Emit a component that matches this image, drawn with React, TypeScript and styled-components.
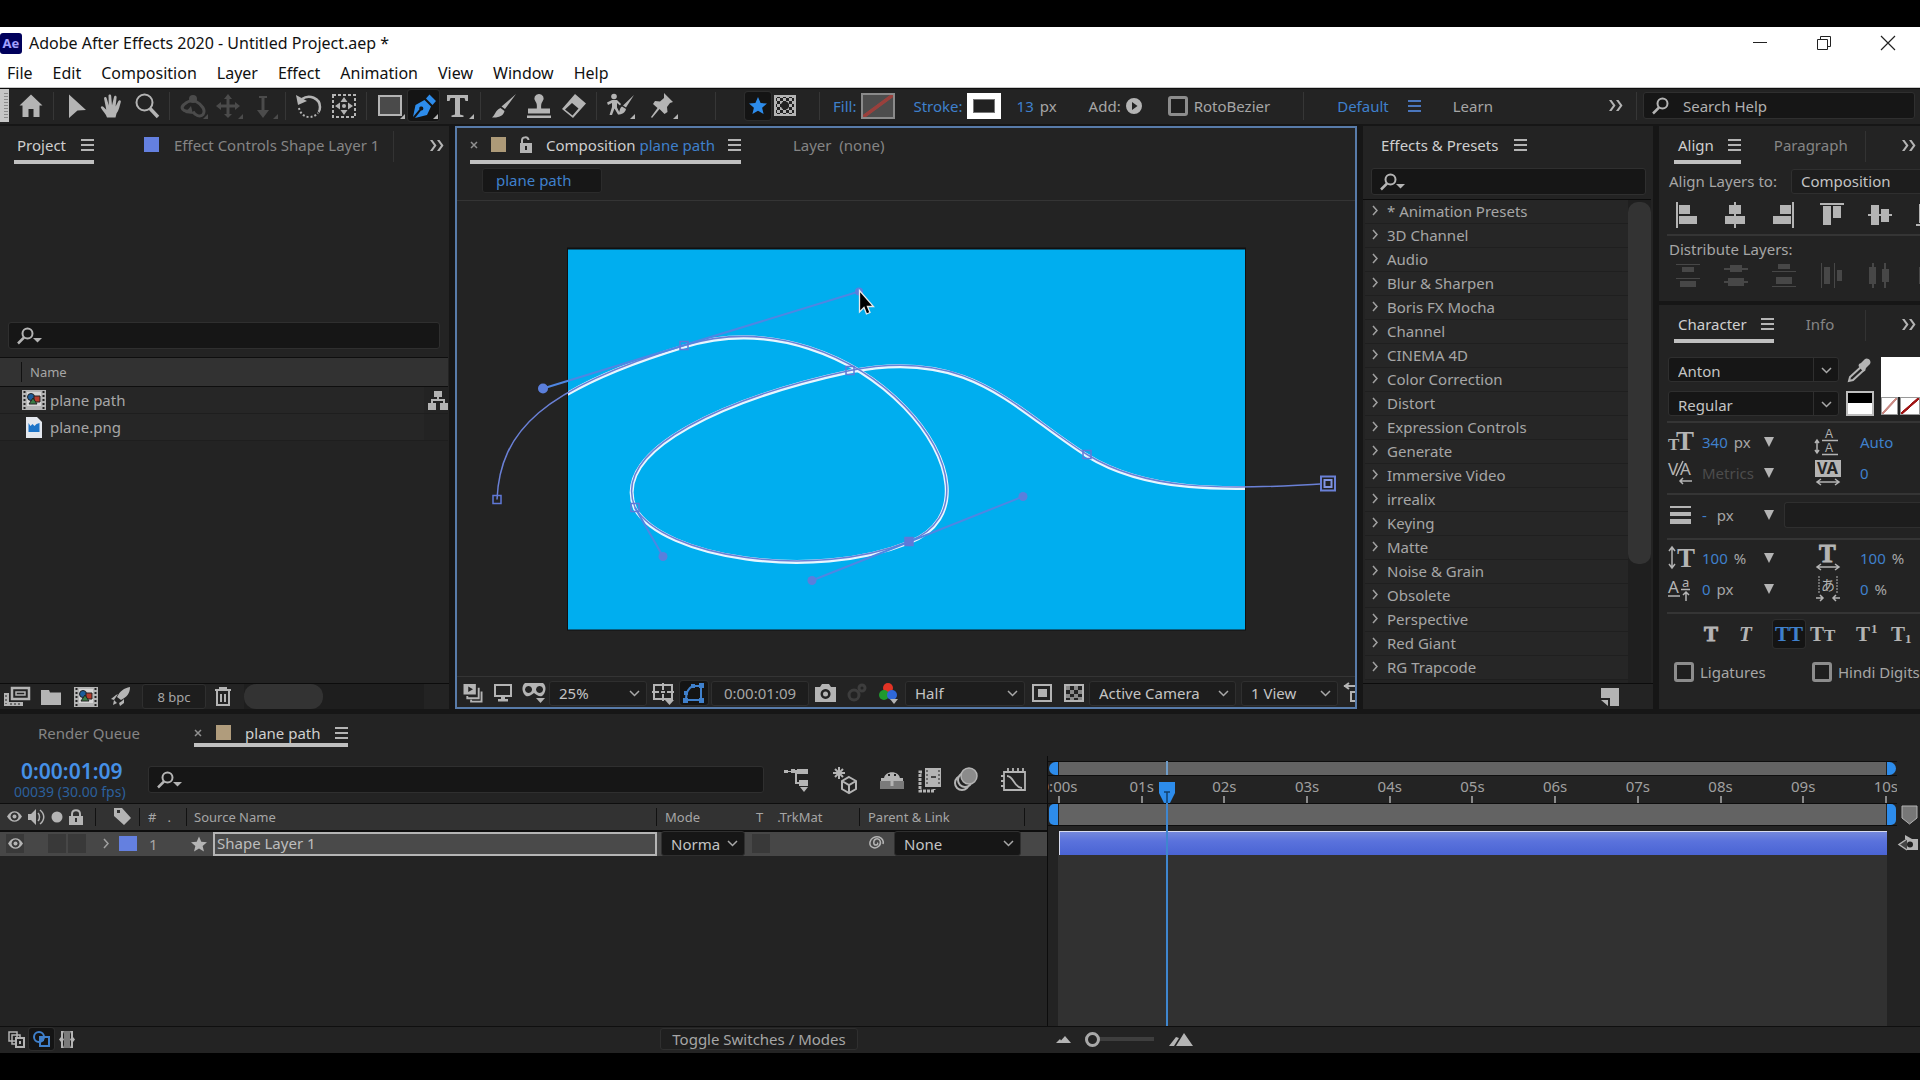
import React from "react";
import styled, { createGlobalStyle, css } from "styled-components";

const c = {
  panel: "#232323",
  gap: "#161616",
  field: "#161616",
  line: "#2f2f2f",
  text: "#a6a6a6",
  bright: "#cfcfcf",
  dim: "#858585",
  icon: "#b4b4b4",
  blue: "#3f80cc",
  hot: "#2d8ceb",
};

const Global = createGlobalStyle`
  *, *::before, *::after { box-sizing: border-box; }
  body { margin: 0; background: #000; }
  button, input, select { font: inherit; color: inherit; margin: 0; }
  body, #root { font-family: "Noto Sans", "Open Sans", sans-serif; font-size: 15px; line-height: 20px; color: ${c.text}; }
  h2 { font: inherit; margin: 0; }
`;

/* ---------- page frame ---------- */

const Page = styled.div`
  display: grid;
  grid-template-rows: 61px 36px minmax(0, 590fr) minmax(0, 339fr);
  height: 100vh;
  padding: 27px 0;
  background: #000;
  overflow: hidden;
`;

const TitleArea = styled.header`
  background: #fff;
  color: #111;
  font-size: 16px;
  border-bottom: 1px solid #c8c8c8;
`;

const TitleRow = styled.div`
  display: flex;
  align-items: center;
  height: 32px;
  gap: 7px;
`;

const AeBadge = styled.span`
  width: 22px;
  height: 21px;
  border-radius: 3px;
  background: #00005b;
  color: #a3a0ff;
  font-size: 13px;
  font-weight: 700;
  line-height: 20px;
  text-align: center;
`;

const WindowButtons = styled.div`
  display: flex;
  margin-left: auto;
  gap: 24px;
  padding-right: 12px;
`;

const WindowButton = styled.button`
  display: grid;
  place-items: center;
  width: 40px;
  height: 28px;
  padding: 0;
  border: 0;
  background: none;
`;

const MenuBar = styled.nav`
  display: flex;
  gap: 20px;
  padding: 3px 7px;
`;

const MenuItem = styled.button`
  padding: 0;
  border: 0;
  background: none;
  line-height: 22px;
`;

/* ---------- shared controls ---------- */

const Svg = styled.svg`
  display: block;
  flex: none;
  overflow: visible;
  fill: ${c.icon};
`;

const IconButton = styled.button<{ $w?: number; $h?: number; $on?: boolean; $margin?: number }>`
  display: grid;
  place-items: center;
  flex: none;
  width: ${(p) => p.$w ?? 30}px;
  height: ${(p) => p.$h ?? 24}px;
  margin: 0 ${(p) => p.$margin ?? 0}px;
  padding: 0;
  border: 0;
  border-radius: 3px;
  background: ${(p) => (p.$on ? "#141414" : "none")};
  box-shadow: ${(p) => (p.$on ? "0 0 0 1px #2d2d2d" : "none")};
`;

const TextButton = styled.button<{ $blue?: boolean }>`
  padding: 0;
  border: 0;
  background: none;
  white-space: nowrap;
  color: ${(p) => (p.$blue ? c.blue : "inherit")};
`;

const Spacer = styled.span`
  flex: 1;
`;

const SelectWrap = styled.span<{ $w?: number; $dark?: boolean }>`
  display: grid;
  grid-template-columns: minmax(0, 1fr) 24px;
  align-items: center;
  flex: ${(p) => (p.$w ? "none" : "1")};
  width: ${(p) => (p.$w ? `${p.$w}px` : "auto")};
  height: 25px;
  border: 1px solid ${c.line};
  border-radius: 3px;
  background: ${(p) => (p.$dark ? c.field : "#1d1d1d")};
  color: #c4c4c4;
  overflow: hidden;
  & > select {
    grid-area: 1 / 1 / 2 / 3;
    width: 100%;
    height: 23px;
    padding: 0 9px;
    border: 0;
    background: none;
    appearance: none;
    outline: none;
  }
  & > svg {
    grid-area: 1 / 2;
    pointer-events: none;
    justify-self: center;
  }
`;

const Chevron = () => (
  <Svg width="11" height="7" viewBox="0 0 11 7">
    <path d="M1 1l4.500 4.500L10 1" fill="none" stroke="#a8a8a8" strokeWidth="1.500" />
  </Svg>
);

function Select({ label, value, w, dark }: { label: string; value: string; w?: number; dark?: boolean }) {
  return (
    <SelectWrap $w={w} $dark={dark}>
      <select aria-label={label} defaultValue={value}>
        <option>{value}</option>
      </select>
      <Chevron />
    </SelectWrap>
  );
}

const SearchBox = styled.label`
  display: flex;
  align-items: center;
  gap: 12px;
  flex: 1;
  min-width: 0;
  height: 27px;
  padding-left: 8px;
  border: 1px solid ${c.line};
  border-radius: 3px;
  background: ${c.field};
  & > input {
    flex: 1;
    min-width: 0;
    padding: 0;
    border: 0;
    background: none;
    outline: none;
    color: #b0b0b0;
  }
  & > input::placeholder {
    color: #b0b0b0;
    opacity: 1;
  }
`;

const SearchGlyph = ({ menu = true }: { menu?: boolean }) => (
  <Svg width={menu ? 25 : 19} height="18" viewBox={menu ? "0 0 25 18" : "0 0 19 18"}>
    <circle cx="10.500" cy="6.500" r="5" fill="none" stroke={c.icon} strokeWidth="2" />
    <path d="M7 10.500L1 16.500" stroke={c.icon} strokeWidth="2.500" />
    {menu && <path d="M16 11h9l-4.500 4.500z" />}
  </Svg>
);

const Check = styled.label`
  display: flex;
  align-items: center;
  gap: 6px;
  white-space: nowrap;
  & > input {
    appearance: none;
    width: 20px;
    height: 20px;
    border: 3px solid #8c8c8c;
    border-radius: 3px;
    background: #1f1f1f;
  }
`;

/* ---------- tool bar ---------- */

const Toolbar = styled.div`
  display: flex;
  align-items: center;
  padding-bottom: 2px;
  background: ${c.panel};
  border-top: 1px solid #0d0d0d;
`;

const Grip = styled.span`
  align-self: stretch;
  width: 9px;
  margin-right: 4px;
  background: repeating-linear-gradient(#8a8a8a 0 1px, #c6c6c6 1px 3px) 4px 4px / 4px 26px no-repeat, #c6c6c6;
`;

const Sep = styled.span`
  flex: none;
  width: 1px;
  height: 28px;
  margin: 0 5px;
  background: #363636;
`;

const Group = styled.div<{ $before?: number; $after?: number; $gap?: number }>`
  display: flex;
  align-items: center;
  gap: ${(p) => p.$gap ?? 0}px;
  padding: 0 ${(p) => p.$after ?? 0}px 0 ${(p) => p.$before ?? 0}px;
`;

const Swatch = styled.button<{ $kind: "none" | "stroke" }>`
  display: grid;
  place-items: center;
  width: 34px;
  height: 26px;
  padding: 0;
  ${(p) =>
    p.$kind === "none"
      ? css`
          border: 2px solid #8a8a8a;
          background: linear-gradient(to bottom right, #4d4d4d 44%, #99403c 46% 54%, #4d4d4d 56%);
        `
      : css`
          border: 6px solid #fff;
          background: #222;
          box-shadow: inset 0 0 0 1px #777;
        `}
`;

const SearchHelp = styled.div`
  display: flex;
  flex: none;
  width: 272px;
  margin: 0 5px 0 1px;
`;

const MenuLines = ({ color = c.icon }: { color?: string }) => (
  <Svg width="13" height="12" viewBox="0 0 13 12">
    <path d="M0 1h13M0 6h13M0 11h13" stroke={color} strokeWidth="2" />
  </Svg>
);

const More = () => (
  <Svg width="15" height="13" viewBox="0 0 15 13">
    <path d="M1 1h2.500l4 5.500-4 5.500H1l4-5.500zM8 1h2.500l4 5.500-4 5.500H8l4-5.500z" />
  </Svg>
);

const Corner = ({ x = 24, y = 22 }: { x?: number; y?: number }) => <path d={`M${x + 5} ${y}v5h-5z`} />;

const T = ({ children, dim }: { children: React.ReactNode; dim?: boolean }) => (
  <Svg width="28" height="28" viewBox="0 0 28 28">
    <g fill={dim ? "#4b4b4b" : c.icon}>{children}</g>
  </Svg>
);

const tool: Record<string, React.ReactNode> = {
  home: <T><path d="M14 2.500L2.500 13.500h3V25h6v-8h5v8h6V13.500h3z" /></T>,
  select: <T><path d="M6 2.500l17 15.500-8.500.5L6 26z" /></T>,
  hand: (
    <T>
      <path d="M9 25.500c-1-3.500-4-6-6-9.500-.8-1.500 1.200-2.500 2.300-1.300l3 3-2.200-11c-.3-1.900 2.100-2.300 2.600-.5l2.100 7.300-.3-9.500c0-1.900 2.500-1.900 2.700 0l.8 9.200 2-8.200c.5-1.800 2.800-1.400 2.600.5l-1 9 2.800-5.500c.9-1.600 2.900-.8 2.400.9-1.300 4.400-1.800 8.200-4.300 11.600l-1 4z" />
    </T>
  ),
  zoom: (
    <T>
      <circle cx="11.500" cy="10.500" r="8" fill="none" stroke={c.icon} strokeWidth="2" />
      <path d="M17 16.500l8 8.500" stroke={c.icon} strokeWidth="3.500" />
    </T>
  ),
  orbit: (
    <T dim>
      <path d="M10 19c-6 1-9-3-5-6.500 3-3 8-5 12-3 6 3 10 9 7 13-3 3-8 1-10-3" fill="none" stroke="#4b4b4b" strokeWidth="3" />
      <path d="M12 14l2 8-8-1z" /><circle cx="14" cy="7" r="4" /><Corner />
    </T>
  ),
  pan: <T dim><path d="M14 2l4 5h-2.500v5.500H21V10l5 4-5 4v-2.500h-5.500V22H18l-4 4-4-4h2.500v-6.500H7V18l-5-4 5-4v2.500h5.500V7H10z" /><Corner /></T>,
  dolly: <T dim><path d="M10 4h8v2h-2.500v12h4.500l-6 8-6-8h4.500V6H10z" /><Corner /></T>,
  rotate: (
    <T>
      <path d="M7 7c7-5 18-1 18 8 0 2-.5 4-1.500 5" fill="none" stroke={c.icon} strokeWidth="2.500" />
      <path d="M1 3l2 10 9-4z" />
      <path d="M4 16c1 5 5 9 10 9s7-2 9-4" fill="none" stroke={c.icon} strokeWidth="2" strokeDasharray="2 2" />
    </T>
  ),
  anchor: (
    <T>
      <rect x="3" y="3" width="22" height="22" fill="none" stroke={c.icon} strokeWidth="2" strokeDasharray="3 2" />
      <path d="M14 5l3.500 5h-7zM14 23l3.500-5h-7zM5 14l5-3.500v7zM23 14l-5-3.500v7z" />
      <circle cx="14" cy="14" r="2" />
    </T>
  ),
  rect: <T><rect x="3" y="4" width="22" height="19" fill="#4a4a4a" stroke={c.icon} strokeWidth="2" /><Corner /></T>,
  pen: (
    <T>
      <path fill={c.hot} d="M3 25l2.500-12 9-5 6.500 6.500-4 8.500L5 26l6-7.500a2 2 0 1 0-1.500-1.200zM16 6.500l3.500-4L26 9l-3.500 4z" />
      <Corner x={23} />
    </T>
  ),
  type: <T><path d="M3 3h21v6h-2.500l-1-3h-4.500v16.500l3.500 1V25h-12v-1.500l3.500-1V6H6.500l-1 3H3z" /><Corner x={25} /></T>,
  brush: <T><path d="M26 2L15 17l-3.500-2.500zM10.500 16l4 3c-1 4.500-5 7-12.500 6.500 3-2 3-7 8.500-9.500z" /></T>,
  stamp: <T><path d="M14 2a4.500 4.500 0 0 1 3.500 7.500c-1.500 2-1.500 4-1.300 7H25v5H3v-5h8.800c.2-3 .2-5-1.300-7A4.500 4.500 0 0 1 14 2zM2 23.500h24V26H2z" /></T>,
  eraser: <T><path d="M15 2l11 9.500L13 26 2 17zm-3 9l-7 6.500 7.500 6 6-7z" fillRule="evenodd" /></T>,
  roto: (
    <T>
      <circle cx="8" cy="4.500" r="2.800" />
      <path d="M1 10.500l2-1 3-1.500h5l4 4-1 1.500-3-2.500v4.500l3 6-2 1-3.500-6L6 23H3.500L6 15v-4l-4 2z" />
      <path d="M28 3L20 15.500l-3-2zM16 14.500l4 2.500c-1 4-4 5.500-8 5.500 2-2 1-6 4-8z" /><Corner />
    </T>
  ),
  pin: <T><path d="M15 1l9 9-3 1-3 4 .5 5-3 2-5-5L3 26l-1-1 6.500-9-4.500-4 2-3 5 .5 4-3.500z" /><Corner /></T>,
};

const groups = [
  ["home"],
  ["select", "hand", "zoom"],
  ["orbit", "pan", "dolly"],
  ["rotate", "anchor"],
  ["rect", "pen", "type"],
  ["brush", "stamp", "eraser"],
];

function ToolsBar() {
  return (
    <Toolbar>
      <Grip />
      {groups.map((g) => (
        <React.Fragment key={g[0]}>
          {g.map((n) => (
            <IconButton key={n} $w={n === "pen" ? 31 : 35} $margin={n === "pen" ? 1 : 0} $h={31} $on={n === "pen"} aria-label={n}>
              {tool[n]}
            </IconButton>
          ))}
          <Sep />
        </React.Fragment>
      ))}
      <Group $gap={8} $after={30}>
        <IconButton $w={35} $h={31} aria-label="roto">{tool.roto}</IconButton>
        <IconButton $w={35} $h={31} aria-label="pin">{tool.pin}</IconButton>
      </Group>
      <Sep />
      <Group $before={24} $after={18} $gap={3}>
        <IconButton $w={26} $h={28} $on aria-label="create shape">
          <Svg width="18" height="18" viewBox="0 0 18 18"><path fill={c.hot} d="M9 0l2.600 6 6.400.6-4.900 4.200L14.600 17 9 13.700 3.400 17l1.500-6.200L0 6.600 6.400 6z" /></Svg>
        </IconButton>
        <IconButton $w={22} $h={24} aria-label="create mask">
          <Svg width="22" height="21" viewBox="0 0 22 21">
            <defs>
              <pattern id="chk" width="6" height="6" patternUnits="userSpaceOnUse"><path d="M0 0h3v3H0zM3 3h3v3H3z" /></pattern>
            </defs>
            <rect x="1" y="1" width="20" height="19" fill="#222" stroke={c.icon} strokeWidth="2" />
            <rect x="2" y="2" width="18" height="17" fill="url(#chk)" />
            <circle cx="11" cy="10.500" r="4" fill="#222" />
          </Svg>
        </IconButton>
      </Group>
      <Sep />
      <Group $before={8} $gap={5}>
        <TextButton $blue>Fill:</TextButton>
        <Swatch $kind="none" aria-label="Fill colour" />
      </Group>
      <Group $before={18} $gap={4}>
        <TextButton $blue>Stroke:</TextButton>
        <Swatch $kind="stroke" aria-label="Stroke colour" />
      </Group>
      <Group $before={16} $gap={6}>
        <TextButton $blue>13</TextButton>
        <span>px</span>
      </Group>
      <Group $before={32} $after={4} $gap={5}>
        <span>Add:</span>
        <IconButton $w={16} aria-label="Add">
          <Svg width="16" height="16" viewBox="0 0 16 16"><path fillRule="evenodd" d="M8 0a8 8 0 1 1 0 16A8 8 0 0 1 8 0zM6 4v8l5.500-4z" /></Svg>
        </IconButton>
      </Group>
      <Group $before={22} $after={28}>
        <Check><input type="checkbox" />RotoBezier</Check>
      </Group>
      <Sep />
      <Group $before={28} $gap={19}>
        <TextButton $blue>Default</TextButton>
        <MenuLines color="#4a76bd" />
      </Group>
      <Group $before={32}><TextButton>Learn</TextButton></Group>
      <Spacer />
      <More />
      <Group $before={8}><Sep /></Group>
      <SearchHelp>
        <SearchBox><SearchGlyph menu={false} /><input placeholder="Search Help" aria-label="Search Help" /></SearchBox>
      </SearchHelp>
    </Toolbar>
  );
}

/* ---------- panels ---------- */

const Workspace = styled.main`
  display: grid;
  grid-template-columns: minmax(0, 449fr) minmax(0, 902fr) minmax(0, 290fr) minmax(0, 261fr);
  grid-template-rows: minmax(0, 1fr);
  gap: 6px;
  padding: 2px 0 5px;
  background: ${c.gap};
`;

const Panel = styled.section<{ $active?: boolean }>`
  display: flex;
  flex-direction: column;
  min-width: 0;
  min-height: 0;
  overflow: hidden;
  background: ${c.panel};
  ${(p) => p.$active && "outline: 2px solid #587ba9; outline-offset: -2px;"}
`;

const Column = styled.div`
  display: grid;
  grid-template-rows: 175px minmax(0, 1fr);
  gap: 4px;
  min-width: 0;
`;

const TabBar = styled.div<{ $pad?: number }>`
  display: flex;
  align-items: stretch;
  flex: none;
  height: 38px;
  padding-left: ${(p) => p.$pad ?? 14}px;
`;

const Tab = styled.div<{ $on?: boolean; $gap?: number; $pad?: number; $plain?: boolean }>`
  display: flex;
  align-items: center;
  gap: ${(p) => p.$gap ?? 14}px;
  padding: 3px 0 0 ${(p) => p.$pad ?? 4}px;
  white-space: nowrap;
  color: ${(p) => (p.$on ? c.bright : c.dim)};
  border-bottom: 4px solid ${(p) => (p.$on && !p.$plain ? "#c0c0c0" : "transparent")};
`;

const TabRule = styled.span`
  width: 1px;
  margin: 5px 0 2px;
  background: #333;
`;

const TabMore = styled.button`
  display: grid;
  place-items: center;
  padding: 0;
  border: 0;
  background: none;
`;

const ColorChip = styled.i<{ $c: string; $w?: number }>`
  display: block;
  width: ${(p) => p.$w ?? 15}px;
  height: 15px;
  background: ${(p) => p.$c};
`;

const CloseMark = () => (
  <Svg width="8" height="8" viewBox="0 0 8 8"><path d="M1 1l6 6M7 1L1 7" stroke="#909090" strokeWidth="1.500" /></Svg>
);

const Footer = styled.div<{ $pad?: number }>`
  display: flex;
  align-items: center;
  flex: none;
  height: 26px;
  padding: 0 ${(p) => p.$pad ?? 0}px;
  border-top: 1px solid #0c0c0c;
`;

/* ---------- project ---------- */

const ProjectSearch = styled.div`
  display: flex;
  flex: none;
  padding: 158px 9px 8px 8px;
`;

const ProjectTable = styled.table`
  width: calc(100% - 1px);
  border-collapse: collapse;
  table-layout: fixed;
  th {
    height: 29px;
    padding: 0;
    background: #323232;
    border: solid #0e0e0e;
    border-width: 1px 0;
    font-weight: 400;
    font-size: 13px;
    text-align: left;
  }
  td {
    height: 27px;
    padding: 0;
    border-bottom: 1px solid #1e1e1e;
  }
  td:first-child {
    background: #262626;
  }
`;

const HeadLabel = styled.span`
  display: block;
  margin-left: 21px;
  padding-left: 8px;
  border-left: 1px solid #111;
`;

const ItemCell = styled.span`
  display: grid;
  grid-template-columns: 24px 1fr;
  align-items: center;
  gap: 4px;
  padding-left: 22px;
  & > svg { justify-self: center; }
`;

const UseCell = styled.span`
  display: flex;
  justify-content: flex-end;
`;

const DepthButton = styled.button`
  width: 64px;
  height: 25px;
  margin: 0 8px 0 4px;
  padding: 0;
  border: 1px solid ${c.line};
  border-radius: 3px;
  background: #1d1d1d;
  font-size: 13px;
`;

const HScroll = styled.div`
  flex: none;
  width: 180px;
  margin-left: 12px;
  background: #1e1e1e;
  &::before {
    content: "";
    display: block;
    width: 79px;
    height: 25px;
    border-radius: 12px;
    background: #333;
  }
`;

const CompGlyph = () => (
  <Svg width="24" height="20" viewBox="0 0 24 20">
    <path d="M0 0h24v20H0z" />
    <path d="M2.500 1v18M21.500 1v18" stroke="#222" strokeWidth="2" strokeDasharray="2 2" />
    <path d="M5 2h14v14H5z" fill="#d5d5d5" />
    <circle cx="9" cy="7" r="3.500" fill="#1c5d9b" stroke="#222" />
    <path d="M12 6h6v6h-6z" fill="#b63b2c" stroke="#222" />
    <path d="M11 8l4 6H7z" fill="#3a7d44" stroke="#222" />
  </Svg>
);

const FileGlyph = () => (
  <Svg width="16" height="21" viewBox="0 0 16 21">
    <path d="M0 0h11l5 5v16H0z" fill="#e4e8ee" />
    <path d="M2.500 6l2 3 2-2 2 2 2-2 3-1v9h-11z" fill="#1c74c8" />
  </Svg>
);

function ProjectPanel() {
  return (
    <Panel>
      <TabBar>
        <Tab $on $pad={3} $gap={15}><h2>Project</h2><MenuLines /></Tab>
        <Tab $pad={50} $gap={15}><ColorChip $c="#6480e0" /><span>Effect Controls Shape Layer 1</span></Tab>
        <Spacer />
        <TabRule />
        <Group $before={35} $after={5}><TabMore aria-label="More"><More /></TabMore></Group>
      </TabBar>
      <ProjectSearch><SearchBox><SearchGlyph /><input aria-label="Search project" /></SearchBox></ProjectSearch>
      <ProjectTable>
        <colgroup><col /><col width="24" /></colgroup>
        <thead><tr><th colSpan={2}><HeadLabel>Name</HeadLabel></th></tr></thead>
        <tbody>
          <tr>
            <td><ItemCell><CompGlyph />plane path</ItemCell></td>
            <td>
              <UseCell>
                <Svg width="20" height="19" viewBox="0 0 20 19">
                  <path d="M6 0h8v6H6zM0 12h8v7H0zM12 12h8v7h-8z" />
                  <path d="M10 5v4M4 13V9h12v4" fill="none" stroke={c.icon} strokeWidth="2" />
                </Svg>
              </UseCell>
            </td>
          </tr>
          <tr><td><ItemCell><FileGlyph />plane.png</ItemCell></td><td /></tr>
        </tbody>
      </ProjectTable>
      <Spacer />
      <Footer>
        <IconButton $w={33} aria-label="Interpret footage">
          <Svg width="26" height="19" viewBox="0 0 26 19">
            <path d="M8 1h17v11H8z" fill="none" stroke={c.icon} strokeWidth="2.500" /><path d="M12 5h9v3h-9z" fill="none" stroke={c.icon} strokeWidth="1.500" />
            <path d="M0 6h5v9h14v4H0z" /><path d="M2 8v9M6 17h11" stroke="#222" strokeDasharray="2 2" />
          </Svg>
        </IconButton>
        <IconButton $w={35} aria-label="New folder"><Svg width="20" height="16" viewBox="0 0 20 16"><path d="M0 1h8l1 2.500h11V16H0z" /></Svg></IconButton>
        <IconButton $w={35} aria-label="New composition"><CompGlyph /></IconButton>
        <IconButton $w={35} aria-label="Project settings">
          <Svg width="20" height="19" viewBox="0 0 20 19"><path d="M19 0c0 6-3 10-9 13l-4-3c3-6 7-9 13-10zM5 8l2-1-4 6-3-1zM11 14l2-2v4l-4 3-1-3zM3 13l3 3-4 2z" /></Svg>
        </IconButton>
        <DepthButton>8 bpc</DepthButton>
        <IconButton $w={18} aria-label="Delete">
          <Svg width="16" height="19" viewBox="0 0 16 19"><path d="M0 3h16M5 3V1h6v2M2 4v14h12V4M6 7v8M10 7v8" fill="none" stroke={c.icon} strokeWidth="2" /></Svg>
        </IconButton>
        <HScroll />
      </Footer>
    </Panel>
  );
}

/* ---------- composition viewer ---------- */

const Crumbs = styled.div`
  display: flex;
  flex: none;
  height: 36px;
  padding: 4px 27px 0;
`;

const Crumb = styled.button`
  width: 120px;
  height: 25px;
  padding: 0 13px 2px;
  border: 1px solid #2b2b2b;
  border-radius: 3px;
  background: #171717;
  color: ${c.blue};
  text-align: left;
`;

const Viewer = styled.div`
  flex: 1;
  min-height: 0;
  margin: 0 2px;
  border: solid #343434;
  border-width: 1px 0;
  & > svg { display: block; width: 100%; height: 100%; }
`;

const ViewerBar = styled.div`
  display: flex;
  align-items: center;
  flex: none;
  height: 32px;
  padding: 0 2px 0 3px;
  overflow: hidden;
`;

const TimeField = styled.input`
  flex: none;
  width: 98px;
  height: 25px;
  margin-left: 3px;
  padding: 0;
  border: 1px solid ${c.line};
  border-radius: 3px;
  background: #1d1d1d;
  text-align: center;
`;

const spline =
  "M497 499C500 430 543 388 684 345C859 291 1023 496 909 541C812 580 663 556 635 507C610 447 730 396 850 370C970 346 1013 407 1087 454C1145 490 1220 490 1328 483";

const Node = ({ x, y, on }: { x: number; y: number; on?: boolean }) => (
  <rect x={x - 4} y={y - 4} width="8" height="8" fill={on ? "#6079d8" : "none"} stroke="#6079d8" strokeWidth="1.500" />
);

function CompositionCanvas() {
  return (
    <svg viewBox="457 201 898 474" preserveAspectRatio="xMidYMid meet" role="img" aria-label="Composition preview">
      <clipPath id="frame"><rect x="568" y="249" width="677" height="380" /></clipPath>
      <rect x="567" y="247" width="679" height="383" fill="#101010" />
      <rect x="568" y="249" width="677" height="380" fill="#00aeef" />
      <path d={spline} transform="translate(0 1)" fill="none" stroke="#e8f6ff" strokeWidth="4" clipPath="url(#frame)" />
      <path d={spline} fill="none" stroke="#6a80d6" strokeWidth="1.500" />
      <g fill="none" stroke="#4f86e2" strokeWidth="2">
        <path d="M543 388L859 291M812 580L1023 496M635 507L663 556" />
      </g>
      <g fill="#5b7fdc">
        <circle cx="543" cy="388" r="5" /><circle cx="859" cy="291" r="4" />
        <circle cx="812" cy="580" r="4.500" /><circle cx="1023" cy="496" r="4.500" /><circle cx="663" cy="556" r="4.500" />
      </g>
      <Node x={497} y={499} /><Node x={684} y={345} /><Node x={850} y={370} /><Node x={1087} y={454} />
      <Node x={635} y={507} /><Node x={909} y={541} on />
      <rect x="1320" y="475" width="16" height="16" fill="#6a80d6" />
      <rect x="1322" y="477" width="12" height="12" fill="#222" />
      <rect x="1324.500" y="479.500" width="7" height="7" fill="#222" stroke="#8194e0" strokeWidth="2" />
      <path d="M859.500 290v21.500l4.500-4.500 2.500 6.500 3.500-1.500-2.500-6h6z" fill="#000" stroke="#e9e9e9" strokeWidth="1.300" />
    </svg>
  );
}

function CompositionPanel() {
  return (
    <Panel $active>
      <TabBar $pad={15}>
        <Tab $on $pad={0} $gap={13}>
          <CloseMark />
          <ColorChip $c="#ad9a78" />
          <Svg width="14" height="17" viewBox="0 0 14 17">
            <path d="M1 7h12v10H1z" /><path d="M3 8V4c0-3 6-4 6.500 0" fill="none" stroke={c.icon} strokeWidth="2" /><path d="M6 10h2v4H6z" fill="#222" />
          </Svg>
          <h2>Composition <TextButton $blue>plane path</TextButton></h2>
          <MenuLines />
        </Tab>
        <Tab $pad={52}>Layer&nbsp; (none)</Tab>
      </TabBar>
      <Crumbs><Crumb>plane path</Crumb></Crumbs>
      <Viewer><CompositionCanvas /></Viewer>
      <ViewerBar>
        <IconButton $w={30} aria-label="Always preview">
          <Svg width="20" height="19" viewBox="0 0 20 20">
            <path fillRule="evenodd" d="M0 0h13v11H0zM5 2.500v6l5-3z" /><path d="M4 12.500v2.500h12V4M8 16.500v2h11V8" fill="none" stroke={c.icon} strokeWidth="2" />
          </Svg>
        </IconButton>
        <IconButton $w={30} aria-label="Main viewer">
          <Svg width="18" height="18" viewBox="0 0 18 18"><path d="M1 1h16v11H1z" fill="none" stroke={c.icon} strokeWidth="2" /><path d="M7 12h4v3h3v2.500H4V15h3z" /></Svg>
        </IconButton>
        <IconButton $w={31} aria-label="View options">
          <Svg width="24" height="22" viewBox="0 0 24 22">
            <path fillRule="evenodd" d="M3 1h18c4 3 3 10-1 13-3 1-5-1-8-3-3 2-5 4-8 3C0 11-1 4 3 1zm3.500 3a3.500 3.500 0 1 0 .1 0zm11 0a3.500 3.500 0 1 0 .1 0z" /><path d="M14 16h9l-4.500 5z" />
          </Svg>
        </IconButton>
        <Select label="Magnification" value="25%" w={98} />
        <IconButton $w={32} aria-label="Grid and guides">
          <Svg width="22" height="21" viewBox="0 0 22 21"><path d="M2 2h18v14H2zM11 0v7M11 11v7M0 9h7M15 9h7M9 9h4" fill="none" stroke={c.icon} strokeWidth="2" /><path d="M13 17h9l-4.500 5z" /></Svg>
        </IconButton>
        <Group $before={1}>
          <IconButton $w={28} $on aria-label="Mask visibility">
            <Svg width="22" height="20" viewBox="0 0 22 20"><path d="M3 17c0-7 2-12 7-14h8v14z" fill="none" stroke={c.blue} strokeWidth="2" /><path fill={c.blue} d="M0 15h5v5H0zM16 15h5v5h-5zM16 0h5v5h-5zM8 1h4v4H8zM1 8h4v4H1z" /></Svg>
          </IconButton>
        </Group>
        <TimeField aria-label="Preview time" defaultValue="0:00:01:09" />
        <IconButton $w={32} aria-label="Snapshot">
          <Svg width="21" height="18" viewBox="0 0 21 18"><path fillRule="evenodd" d="M0 3h5l2-3h7l2 3h5v15H0zm10.500 2a5 5 0 1 0 .1 0z" /><circle cx="10.500" cy="10" r="2.500" /></Svg>
        </IconButton>
        <IconButton $w={32} aria-label="Show snapshot">
          <Svg width="20" height="18" viewBox="0 0 20 18"><g fill="none" stroke="#3d3d3d" strokeWidth="3"><circle cx="7" cy="11" r="5" /><circle cx="15" cy="4" r="3" /></g></Svg>
        </IconButton>
        <IconButton $w={32} aria-label="Channels">
          <Svg width="20" height="21" viewBox="0 0 20 21"><circle cx="9" cy="5" r="5" fill="#e23325" /><circle cx="5" cy="12" r="5" fill="#1f9a2f" /><circle cx="13" cy="12" r="5" fill="#2f68d8" /><path d="M11 16h8l-4 5z" /></Svg>
        </IconButton>
        <Select label="Resolution" value="Half" w={120} />
        <IconButton $w={34} aria-label="Region of interest">
          <Svg width="20" height="18" viewBox="0 0 20 18"><path d="M1 1h18v16H1z" fill="none" stroke={c.icon} strokeWidth="2" /><path d="M6 5h9v8H6z" /></Svg>
        </IconButton>
        <IconButton $w={30} aria-label="Transparency grid">
          <Svg width="20" height="18" viewBox="0 0 20 18"><path d="M1 1h18v16H1z" fill="none" stroke={c.icon} strokeWidth="2" /><path d="M2 2h4v4H2zM10 2h4v4h-4zM6 6h4v4H6zM14 6h4v4h-4zM2 10h4v4H2zM10 10h4v4h-4zM6 13h4v3H6zM14 13h4v3h-4z" opacity=".7" /></Svg>
        </IconButton>
        <Select label="3D view" value="Active Camera" w={147} />
        <Group $before={5}><Select label="View layout" value="1 View" w={97} /></Group>
        <Group $before={6}>
          <Svg width="22" height="20" viewBox="0 0 22 20"><path d="M0 3h16M5 0L1 3l4 3M22 9H7v9h15" fill="none" stroke={c.icon} strokeWidth="2" /></Svg>
        </Group>
      </ViewerBar>
    </Panel>
  );
}

/* ---------- effects & presets ---------- */

const effects = [
  "* Animation Presets", "3D Channel", "Audio", "Blur & Sharpen", "Boris FX Mocha", "Channel", "CINEMA 4D",
  "Color Correction", "Distort", "Expression Controls", "Generate", "Immersive Video", "irrealix", "Keying",
  "Matte", "Noise & Grain", "Obsolete", "Perspective", "Red Giant", "RG Trapcode",
];

const EffectSearch = styled.div`
  display: flex;
  flex: none;
  padding: 4px 7px 4px 8px;
`;

const EffectScroll = styled.div`
  display: grid;
  grid-template-columns: minmax(0, 1fr) 23px;
  flex: 1;
  min-height: 0;
  margin-right: 2px;
  border-top: 1px solid #0c0c0c;
  overflow: hidden;
`;

const EffectList = styled.ul`
  margin: 0;
  padding: 0 0 0 2px;
  list-style: none;
`;

const EffectItem = styled.button`
  display: flex;
  align-items: center;
  gap: 8px;
  width: 100%;
  height: 24px;
  padding: 0 0 2px 7px;
  border: 0;
  border-bottom: 1px solid #1f1f1f;
  background: #262626;
  text-align: left;
`;

const ScrollTrack = styled.div`
  background: #1f1f1f;
  &::before {
    content: "";
    display: block;
    height: 75%;
    margin-top: 2px;
    border-radius: 10px;
    background: #333;
  }
`;

const Twirl = () => (
  <Svg width="7" height="11" viewBox="0 0 7 11"><path d="M1 1l4 4.500L1 10" fill="none" stroke="#a0a0a0" strokeWidth="1.500" /></Svg>
);

function EffectsPanel() {
  return (
    <Panel>
      <TabBar>
        <Tab $on $plain $gap={16}><h2>Effects &amp; Presets</h2><MenuLines /></Tab>
      </TabBar>
      <EffectSearch><SearchBox><SearchGlyph /><input aria-label="Search effects" /></SearchBox></EffectSearch>
      <EffectScroll>
        <EffectList>
          {effects.map((e) => (
            <li key={e}><EffectItem><Twirl />{e}</EffectItem></li>
          ))}
        </EffectList>
        <ScrollTrack />
      </EffectScroll>
      <Footer $pad={33}>
        <Spacer />
        <IconButton $w={20} aria-label="New preset">
          <Svg width="18" height="18" viewBox="0 0 18 18"><path d="M0 0h18v18H9V10H0zM0 12h7v6z" /></Svg>
        </IconButton>
      </Footer>
    </Panel>
  );
}

/* ---------- align ---------- */

const AlignHead = styled.div`
  display: flex;
  align-items: center;
  gap: 14px;
  height: 30px;
  padding-left: 10px;
  margin: 2px -30px 0 0;
  white-space: nowrap;
`;

const AlignRow = styled.div<{ $h: number }>`
  display: flex;
  flex: none;
  gap: 13px;
  align-items: center;
  height: ${(p) => p.$h}px;
  padding-left: 11px;
`;

const Rule = styled.hr`
  flex: none;
  height: 2px;
  margin: 0 0 0 8px;
  border: 0;
  background: #353535;
`;

const Caption = styled.div`
  padding: 3px 0 0 10px;
`;

const alignIcons = [
  "M0 0h2v26H0zM3 3h11v9H3zM3 14h18v8H3z",
  "M10 0h2v26h-2zM5 3h12v9H5zM1 14h20v8H1z",
  "M20 0h2v26h-2zM8 3h11v9H8zM1 14h18v8H1z",
  "M0 1h24v2H0zM3 4h8v19H3zM13 4h8v12h-8z",
  "M0 12h24v2H0zM3 3h8v20H3zM13 7h8v13h-8z",
  "M0 22h24v2H0zM3 2h8v19H3zM13 9h8v12h-8z",
];

const distributeIcons = [
  "M0 1h24v1H0zM6 4h12v5H6zM0 15h24v1H0zM4 18h16v6H4z",
  "M0 5h24v2H0zM6 2h12v7H6zM0 18h24v2H0zM4 15h16v8H4z",
  "M6 1h12v5H6zM0 8h24v1H0zM4 14h16v7H4zM0 23h24v1H0z",
  "M1 0h1v25H1zM4 4h6v17H4zM14 0h1v25h-1zM17 7h5v11h-5z",
  "M4 0h2v25H4zM1 4h7v17H1zM16 0h2v25h-2zM14 6h7v13h-7z",
  "M3 4h7v17H3zM12 0h1v25h-1zM16 7h5v11h-5zM22 0h1v25h-1z",
];

const AlignIcon = ({ d, dim }: { d: string; dim?: boolean }) => (
  <IconButton $w={35} $h={28} aria-label="Align">
    <Svg width="24" height="26" viewBox="0 0 24 26"><path d={d} fill={dim ? "#474747" : c.icon} /></Svg>
  </IconButton>
);

function AlignPanel() {
  return (
    <Panel>
      <TabBar $pad={15}>
        <Tab $on><h2>Align</h2><MenuLines /></Tab>
        <Tab $pad={33}>Paragraph</Tab>
        <Spacer />
        <TabRule />
        <Group $before={35} $after={4}><TabMore aria-label="More"><More /></TabMore></Group>
      </TabBar>
      <AlignHead>Align Layers to:<Select label="Align layers to" value="Composition" /></AlignHead>
      <AlignRow $h={38}>{alignIcons.map((d) => <AlignIcon key={d} d={d} />)}</AlignRow>
      <Rule />
      <Caption>Distribute Layers:</Caption>
      <AlignRow $h={33}>{distributeIcons.map((d) => <AlignIcon key={d} d={d} dim />)}</AlignRow>
    </Panel>
  );
}

/* ---------- character ---------- */

const FontGrid = styled.div`
  display: grid;
  grid-template-columns: 171px 28px 1fr;
  gap: 9px 7px;
  flex: none;
  height: 78px;
  padding: 14px 0 5px 9px;
  align-items: center;
`;

const FontPicker = styled.div`
  display: flex;
  & svg { box-sizing: content-box; padding: 9px 7px; border-left: 1px solid ${c.line}; }
`;

const FillWell = styled.div`
  grid-area: 1 / 3 / 3 / 4;
  display: grid;
  grid-template: 40px 18px / 17px 1fr;
  gap: 0 2px;
  align-self: stretch;
`;

const BigWell = styled.button`
  grid-column: 1 / 3;
  border: 0;
  background: #fff;
`;

const MiniWell = styled.button<{ $red: string }>`
  padding: 0;
  border: 1px solid #999;
  background: linear-gradient(to bottom right, #fff 44%, ${(p) => p.$red} 46% 54%, #fff 56%);
`;

const DefaultWell = styled.button`
  height: 25px;
  padding: 0;
  border: 2px solid #bdbdbd;
  background: linear-gradient(#000 50%, #fff 50%);
`;

const Block = styled.div<{ $top: number; $bottom: number }>`
  display: grid;
  flex: none;
  grid-template-columns: 34px 62px 18px 32px 46px 1fr;
  grid-auto-rows: 29px;
  row-gap: 2px;
  align-items: center;
  padding: ${(p) => `${p.$top}px 0 ${p.$bottom}px 9px`};
`;

const Val = styled.span<{ $off?: boolean }>`
  display: flex;
  gap: 6px;
  white-space: nowrap;
  color: ${(p) => (p.$off ? "#4c4c4c" : c.text)};
  & > b { font-weight: 400; color: ${c.blue}; }
`;

const StrokeStyle = styled.input`
  grid-column: 4 / 7;
  height: 26px;
  width: auto;
  margin-left: 2px;
  border: 1px solid ${c.line};
  border-right: 0;
  border-radius: 3px 0 0 3px;
  background: #1d1d1d;
`;

const StyleRow = styled.div`
  display: flex;
  gap: 11px;
  flex: none;
  padding: 6px 0 0 36px;
`;

const OptionRow = styled.div`
  display: grid;
  grid-template-columns: 138px 1fr;
  padding: 14px 0 0 15px;
`;

const Down = () => <Svg width="10" height="10" viewBox="0 0 10 10"><path d="M0 0h10L5 10z" /></Svg>;

const Glyph = ({ children }: { children: React.ReactNode }) => (
  <Svg width="28" height="26" viewBox="0 0 28 26" fontFamily="Liberation Serif, serif" fontWeight="700">{children}</Svg>
);

const HArrow = ({ y = 22, x1 = 3, x2 = 25 }: { y?: number; x1?: number; x2?: number }) => (
  <path d={`M${x1} ${y}h${x2 - x1}M${x1 + 4} ${y - 3}l-4 3 4 3M${x2 - 4} ${y - 3}l4 3-4 3`} fill="none" stroke={c.icon} strokeWidth="1.500" />
);

const styleGlyphs = [
  [<text x="7" y="20" fontSize="21" stroke={c.icon} strokeWidth="1">T</text>, <text x="7" y="20" fontSize="21" fontStyle="italic">T</text>],
  [
    <g fill={c.blue}><text x="0" y="20" fontSize="21">T</text><text x="14" y="20" fontSize="21">T</text></g>,
    <g><text x="0" y="20" fontSize="21">T</text><text x="14" y="20" fontSize="17">T</text></g>,
  ],
  [
    <g><text x="3" y="20" fontSize="21">T</text><text x="18" y="12" fontSize="13">1</text></g>,
    <g><text x="3" y="20" fontSize="21">T</text><text x="17" y="22" fontSize="13">1</text></g>,
  ],
];

function CharacterPanel() {
  return (
    <Panel>
      <TabBar $pad={15}>
        <Tab $on $gap={14}><h2>Character</h2><MenuLines /></Tab>
        <Tab $pad={32}>Info</Tab>
        <Spacer />
        <TabRule />
        <Group $before={35} $after={4}><TabMore aria-label="More"><More /></TabMore></Group>
      </TabBar>
      <FontGrid>
        <FontPicker><Select label="Font family" value="Anton" dark /></FontPicker>
        <IconButton $w={28} aria-label="Eyedropper">
          <Svg width="24" height="24" viewBox="0 0 24 24"><path d="M13 9l3 3L5 22l-4 1 1-4z" fill="none" stroke={c.icon} strokeWidth="2" /><path d="M11 6l2-1 4-4c3-2 7 2 5 5l-4 4-1 3-2 .5L10.500 8z" /></Svg>
        </IconButton>
        <FontPicker><Select label="Font style" value="Regular" dark /></FontPicker>
        <DefaultWell aria-label="Default colours" />
        <FillWell>
          <BigWell aria-label="Fill colour" />
          <MiniWell $red="#c98a84" aria-label="No fill" />
          <MiniWell $red="#a01515" aria-label="No stroke" />
        </FillWell>
      </FontGrid>
      <Rule />
      <Block $top={4} $bottom={6}>
        <Glyph><text x="0" y="21" fontSize="17">T</text><text x="8" y="21" fontSize="27">T</text></Glyph>
        <Val><b>340</b>px</Val><Down /><span />
        <Glyph>
          <g fontFamily="Liberation Sans, sans-serif" fontWeight="400"><text x="11" y="9" fontSize="12">A</text><text x="11" y="23" fontSize="12">A</text></g>
          <path d="M8 11.500h16M8 25.500h16M3 11v13M1 14l2-3 2 3M1 21l2 3 2-3" fill="none" stroke={c.icon} strokeWidth="1.500" />
        </Glyph>
        <Val><b>Auto</b></Val>
        <Glyph>
          <g fontFamily="Noto Sans, sans-serif" fontWeight="400"><text x="0" y="15" fontSize="17">V</text><text x="12" y="15" fontSize="17">A</text></g>
          <path d="M8 16L15 1M12 21h12M15 18l-3 3 3 3" fill="none" stroke={c.icon} strokeWidth="1.500" />
        </Glyph>
        <Val $off>Metrics</Val><Down /><span />
        <Glyph>
          <path d="M1 0h26v17H1z" /><text x="3" y="14" fontSize="16" fill="#222" fontFamily="Noto Sans, sans-serif">VA</text><HArrow />
        </Glyph>
        <Val><b>0</b></Val>
      </Block>
      <Rule />
      <Block $top={5} $bottom={9}>
        <Svg width="24" height="20" viewBox="0 0 24 20"><path d="M2 1h21v2H2zM2 7h21v4H2zM2 14h21v5H2z" /></Svg>
        <Val><b>-</b>&nbsp;px</Val><Down />
        <StrokeStyle aria-label="Stroke style" />
      </Block>
      <Rule />
      <Block $top={3} $bottom={9}>
        <Glyph><text x="9" y="22" fontSize="27">T</text><path d="M4 3v19M1 6l3-4 3 4M1 19l3 4 3-4" fill="none" stroke={c.icon} strokeWidth="1.500" /></Glyph>
        <Val><b>100</b>%</Val><Down /><span />
        <Glyph><text x="5" y="17" fontSize="25" stroke={c.icon} strokeWidth="1">T</text><HArrow /></Glyph>
        <Val><b>100</b>%</Val>
        <Glyph>
          <g fontFamily="Noto Sans, sans-serif" fontWeight="400"><text x="0" y="17" fontSize="17">A</text><text x="14" y="11" fontSize="13">a</text></g>
          <path d="M0 20h12M13 13.500h9M18 25v-9M15 19l3-3 3 3" fill="none" stroke={c.icon} strokeWidth="1.500" />
        </Glyph>
        <Val><b>0</b>px</Val><Down /><span />
        <Glyph>
          <text x="7" y="14" fontSize="14" fontWeight="400" fontFamily="Noto Sans CJK JP, sans-serif">あ</text>
          <path d="M5 0v17M23 0v17" fill="none" stroke={c.icon} strokeDasharray="2 1" /><path d="M2 22h7M6 19l3 3-3 3M26 22h-7M22 19l-3 3 3 3" fill="none" stroke={c.icon} strokeWidth="1.500" />
        </Glyph>
        <Val><b>0</b>%</Val>
      </Block>
      <Rule />
      <StyleRow>
        {styleGlyphs.map((pair, i) => (
          <Group key={i} $gap={3}>
            {pair.map((g, j) => (
              <IconButton key={j} $w={32} $h={28} $on={i === 1 && j === 0} aria-label="Type style"><Glyph>{g}</Glyph></IconButton>
            ))}
          </Group>
        ))}
      </StyleRow>
      <OptionRow>
        <Check><input type="checkbox" />Ligatures</Check>
        <Check><input type="checkbox" />Hindi Digits</Check>
      </OptionRow>
    </Panel>
  );
}

/* ---------- timeline ---------- */

const TimelinePanel = styled.section`
  display: grid;
  grid-template-rows: 42px minmax(0, 1fr) 26px;
  background: ${c.panel};
  overflow: hidden;
`;

const TimelineBody = styled.div`
  display: grid;
  grid-template-columns: minmax(0, 1048fr) minmax(0, 872fr);
  min-height: 0;
  border-bottom: 1px solid #0f0f0f;
`;

const LayerSide = styled.div`
  border-right: 1px solid #0c0c0c;
`;

const TimeBar = styled.div`
  display: flex;
  align-items: center;
  height: 47px;
`;

const TimeCode = styled.div`
  width: 148px;
  padding-left: 14px;
  white-space: nowrap;
`;

const TimeNow = styled.button`
  display: block;
  padding: 0 7px;
  border: 0;
  background: none;
  color: #4590e6;
  font-size: 21px;
  font-weight: 600;
  line-height: 24px;
`;

const Frames = styled.span`
  display: block;
  font-size: 14px;
  line-height: 18px;
  color: #2c609c;
`;

const LayerTable = styled.table`
  width: 100%;
  border-collapse: collapse;
  table-layout: fixed;
  th {
    height: 27px;
    padding: 0;
    border: solid #0e0e0e;
    border-width: 1px 0 2px;
    background: #323232;
    font-size: 13px;
    font-weight: 400;
    text-align: left;
    white-space: nowrap;
  }
  td {
    height: 24px;
    padding: 0;
    background: #474747;
  }
`;

const Cell = styled.span<{ $pad?: number; $gap?: number; $rule?: boolean }>`
  display: flex;
  align-items: center;
  height: 18px;
  gap: ${(p) => p.$gap ?? 0}px;
  padding-left: ${(p) => p.$pad ?? 8}px;
  border-right: 1px solid ${(p) => (p.$rule ? "#111" : "transparent")};
`;

const Toggle = styled.button`
  display: grid;
  place-items: center;
  width: 18px;
  height: 19px;
  padding: 0;
  border: 0;
  background: #393939;
`;

const NameInput = styled.input`
  flex: 1;
  min-width: 0;
  height: 24px;
  padding: 0 2px 2px;
  border: 2px solid #b5b5b5;
  background: #4a4a4a;
  color: #bdbdbd;
  outline: none;
`;

const RowCell = styled.span<{ $pad?: number; $gap?: number }>`
  display: flex;
  align-items: center;
  height: 24px;
  gap: ${(p) => p.$gap ?? 0}px;
  padding-left: ${(p) => p.$pad ?? 0}px;
`;

const Eye = () => (
  <Svg width="15" height="11" viewBox="0 0 15 11"><path fillRule="evenodd" d="M0 5.500C4-1.500 11-1.500 15 5.500 11 12.500 4 12.500 0 5.500zM7.500 1.500a4 4 0 1 0 .1 0z" /><circle cx="7.500" cy="5.500" r="2" /></Svg>
);

function LayerList() {
  return (
    <LayerTable>
      <colgroup>
        <col width="96" /><col width="44" /><col width="47" /><col /><col width="91" /><col width="112" /><col width="165" /><col width="22" />
      </colgroup>
      <thead>
        <tr>
          <th>
            <Cell $gap={6} $rule $pad={7}>
              <Eye />
              <Svg width="17" height="16" viewBox="0 0 17 16"><path d="M0 5h3l5-5v16l-5-5H0z" /><path d="M10 4c2 2 2 6 0 8M12 1c5 4 5 10 0 14" fill="none" stroke={c.icon} strokeWidth="1.500" /></Svg>
              <Svg width="12" height="12" viewBox="0 0 12 12"><circle cx="6" cy="6" r="5.500" /></Svg>
              <Svg width="14" height="16" viewBox="0 0 14 16"><path fillRule="evenodd" d="M0 7h14v9H0zM6 9v4h2V9z" /><path d="M3 8V5c0-5 8-5 8 0v3" fill="none" stroke={c.icon} strokeWidth="2" /></Svg>
            </Cell>
          </th>
          <th>
            <Cell $rule $pad={18}>
              <Svg width="17" height="17" viewBox="0 0 17 17"><path fillRule="evenodd" d="M0 0h8l9 10-7 7L0 8zM3 2v3h3V2z" /></Svg>
            </Cell>
          </th>
          <th><Cell $rule $gap={11}>#<span>.</span></Cell></th>
          <th><Cell $rule $pad={7}>Source Name</Cell></th>
          <th><Cell>Mode</Cell></th>
          <th><Cell $rule $gap={14}><span>T</span><span>.TrkMat</span></Cell></th>
          <th><Cell $rule>Parent &amp; Link</Cell></th>
          <th />
        </tr>
      </thead>
      <tbody>
        <tr>
          <td><RowCell $pad={6} $gap={2}><Toggle aria-label="Visible"><Eye /></Toggle><Group $before={22} $gap={2}><Toggle aria-label="Solo" /><Toggle aria-label="Lock" /></Group></RowCell></td>
          <td><RowCell $pad={7} $gap={9}><Twirl /><ColorChip $c="#6480e0" $w={18} /></RowCell></td>
          <td><RowCell $pad={9}>1</RowCell></td>
          <td>
            <RowCell $pad={4} $gap={6}>
              <Svg width="16" height="16" viewBox="0 0 18 17"><path d="M9 0l2.600 6 6.400.6-4.900 4.200L14.600 17 9 13.700 3.400 17l1.500-6.200L0 6.600 6.400 6z" /></Svg>
              <NameInput aria-label="Layer name" defaultValue="Shape Layer 1" />
            </RowCell>
          </td>
          <td><RowCell $pad={4}><Select label="Blend mode" value="Norma" w={84} dark /></RowCell></td>
          <td><RowCell $pad={4}><Toggle aria-label="Preserve transparency" /></RowCell></td>
          <td>
            <RowCell $pad={8} $gap={9}>
              <Svg width="17" height="17" viewBox="0 0 17 17"><path d="M9 8c1 0 1 2-1 2-3 0-3-5 0-6 4-1 6 4 3 7-4 4-10 1-9-4 1-4 5-6 9-5 3 1 5 4 4 7" fill="none" stroke={c.icon} strokeWidth="1.500" /></Svg>
              <Select label="Parent" value="None" w={127} dark />
            </RowCell>
          </td>
          <td />
        </tr>
      </tbody>
    </LayerTable>
  );
}

const TrackSide = styled.div`
  display: grid;
  grid-template-columns: minmax(0, 1fr) 23px;
  min-height: 0;
  padding-top: 5px;
`;

const Tracks = styled.div`
  position: relative;
  display: grid;
  grid-template-rows: 15px 27px 23px 5px 24px minmax(0, 1fr);
  overflow: hidden;
`;

const Range = styled.div<{ $cap: number }>`
  display: flex;
  padding-left: 1px;
  padding-right: 1px;
  border: solid #0e0e0e;
  border-width: 1px 0;
  & > i { width: 9px; background: ${c.hot}; border-radius: ${(p) => p.$cap}px 0 0 ${(p) => p.$cap}px; }
  & > i:last-child { border-radius: 0 ${(p) => p.$cap}px ${(p) => p.$cap}px 0; }
  & > span { flex: 1; margin: 0 1px; background: #636363; }
`;

const Ruler = styled.div`
  display: flex;
  justify-content: space-between;
  padding: 0 10px;
`;

const Tick = styled.span`
  display: flex;
  flex-direction: column;
  align-items: center;
  width: 2px;
  white-space: nowrap;
  color: #a0a0a0;
  &::after {
    content: "";
    flex: 1;
    width: 2px;
    background: #8a8a8a;
  }
`;

const TickLabel = styled.span`
  display: flex;
  justify-content: center;
  width: 0;
`;

const LayerTrack = styled.div`
  margin: 0 10px 0 11px;
  border: solid #d8dcf0;
  border-width: 1px 0 0 1px;
  background: linear-gradient(#7488dc, #5a72dc 40%, #4a64d4);
`;

const EmptyTracks = styled.div`
  margin: 0 10px;
  background: #313131;
`;

const PlayheadRail = styled.div`
  position: absolute;
  inset: 0 11px;
  pointer-events: none;
`;

const Playhead = styled.div`
  position: absolute;
  top: 0;
  bottom: 0;
  width: 2px;
  margin-left: -1px;
  background: linear-gradient(#6f9cc8 0 14px, transparent 14px 40px, #3f86cf 40px);
  & > svg { position: absolute; top: 21px; left: -8px; }
`;

const MarkerStrip = styled.div`
  display: flex;
  flex-direction: column;
  align-items: flex-end;
  gap: 10px;
  padding: 44px 2px 0 0;
`;

const timelineIcons: [string, number, React.ReactNode][] = [
  ["Flowchart", 46, <><path d="M0 3h4v1h3V2h4v4H7V5H4v1H0zM13 2h11v5H13zM15 13h9v6h-9zM16 20h8l-4 5z" /><path d="M7 4h8M12 5v11h5" fill="none" stroke={c.icon} strokeWidth="2" /></>],
  ["Draft 3D", 50, <><path d="M7 0v12M1 6h12M3 2l8 8M11 2l-8 8" stroke={c.icon} strokeWidth="2" /><path d="M17 10l7 4v8l-7 4-7-4v-8zM10 14l7 4 7-4M17 18v8" fill="none" stroke={c.icon} strokeWidth="2" /></>],
  ["Shy", 44, <><path d="M1 14h24v8H1z" opacity=".6" /><path d="M5 12c0-9 16-9 16 0zM2 11h22v3H2z" /><path d="M13 8v11" stroke={c.icon} strokeWidth="3" /><path d="M9 8h2M15 8h2" stroke="#222" strokeWidth="2" /></>],
  ["Frame blending", 32, <><path d="M8 1h16v19H8z" /><path d="M5 5H3v19h14v-2" fill="none" stroke={c.icon} strokeWidth="3" strokeDasharray="3 1" /><path d="M10 3v16M22 3v16" stroke="#222" strokeDasharray="2 2" /><path d="M14 10h5" stroke="#222" strokeWidth="1.500" /></>],
  ["Motion blur", 40, <><circle cx="9" cy="16" r="7" fill="#222" stroke={c.icon} strokeWidth="2" /><circle cx="12" cy="13" r="7" fill="#222" stroke={c.icon} strokeWidth="2" /><circle cx="16" cy="9" r="8" fill="#8b8b8b" stroke={c.icon} strokeWidth="1.500" /></>],
  ["Graph editor", 56, <><path d="M3 5h21v18H3zM6 9c7 0 7 12 15 12M7 1v4M12 1v4M17 1v4M22 1v4M0 9h3M0 14h3M0 19h3" fill="none" stroke={c.icon} strokeWidth="1.800" /></>],
];

const seconds = ["0:00s", "01s", "02s", "03s", "04s", "05s", "06s", "07s", "08s", "09s", "10s"];
const frame = 39;
const duration = 300;

const TimelineFooter = styled.div`
  display: grid;
  grid-template-columns: minmax(0, 1048fr) minmax(0, 872fr);
  align-items: center;
  padding-bottom: 2px;
`;

const FooterTools = styled.div`
  display: flex;
  align-items: center;
  padding: 0 190px 0 4px;
`;

const SwitchButton = styled.button`
  width: 198px;
  height: 22px;
  padding: 0;
  border: 1px solid ${c.line};
  border-radius: 3px;
  background: #1f1f1f;
`;

const ZoomSlider = styled.input`
  width: 69px;
  height: 16px;
  margin: 0 15px 0 14px;
  appearance: none;
  background: linear-gradient(#3e3e3e, #3e3e3e) 0 6px / 100% 4px no-repeat;
  &::-webkit-slider-thumb {
    appearance: none;
    width: 15px;
    height: 15px;
    border: 3px solid #a8a8a8;
    border-radius: 50%;
    background: #232323;
  }
`;

function Timeline() {
  return (
    <TimelinePanel>
      <TabBar $pad={34}>
        <Tab>Render Queue</Tab>
        <Group $before={54}>
          <Tab $on $pad={0} $gap={14}><CloseMark /><ColorChip $c="#b09c7c" /><h2>plane path</h2><MenuLines /></Tab>
        </Group>
      </TabBar>
      <TimelineBody>
        <LayerSide>
          <TimeBar>
            <TimeCode><TimeNow>0:00:01:09</TimeNow><Frames>00039 (30.00 fps)</Frames></TimeCode>
            <SearchBox><SearchGlyph /><input aria-label="Search layers" /></SearchBox>
            <Group $before={10} $after={5}>
              {timelineIcons.map(([label, w, art]) => (
                <IconButton key={label} $w={w} $h={30} aria-label={label}><Svg width="26" height="26" viewBox="0 0 26 26">{art}</Svg></IconButton>
              ))}
            </Group>
          </TimeBar>
          <LayerList />
        </LayerSide>
        <TrackSide>
          <Tracks>
            <Range $cap={8}><i /><span /><i /></Range>
            <Ruler>
              {seconds.map((s) => <Tick key={s}><TickLabel>{s}</TickLabel></Tick>)}
            </Ruler>
            <Range $cap={5}><i /><span /><i /></Range>
            <span />
            <LayerTrack />
            <EmptyTracks />
            <PlayheadRail>
              <Playhead style={{ left: `${(frame / duration) * 100}%` }}>
                <Svg width="18" height="21" viewBox="0 0 18 21"><path d="M1 0h16v11l-5 10H6L1 11z" fill={c.hot} /><path d="M9 10v11M6 10h6" stroke="#12406f" strokeWidth="1.500" /></Svg>
              </Playhead>
            </PlayheadRail>
          </Tracks>
          <MarkerStrip>
            <Svg width="17" height="20" viewBox="0 0 17 20"><path d="M1 1h15v12l-7.500 6L1 13z" fill="#777" stroke={c.icon} /></Svg>
            <Svg width="20" height="18" viewBox="0 0 20 18"><path d="M8 4h12v11H8zM7 0l7 4H7z" /><path d="M9 4L1 9.500 9 15" fill="#444" stroke={c.icon} strokeWidth="1.500" /><circle cx="12" cy="9.500" r="3" fill="#222" /></Svg>
          </MarkerStrip>
        </TrackSide>
      </TimelineBody>
      <TimelineFooter>
        <FooterTools>
          <IconButton $w={25} $h={22} aria-label="Layer switches">
            <Svg width="17" height="17" viewBox="0 0 17 17"><path d="M1 1h8v9H1zM4 4h8v9H4z" fill="none" stroke={c.icon} strokeWidth="1.500" /><path d="M8 7h8v9H8z" fill="#222" stroke={c.icon} strokeWidth="2" /><path d="M11 10h2v3h-2z" /></Svg>
          </IconButton>
          <IconButton $w={25} $h={22} $on aria-label="Transfer controls">
            <Svg width="17" height="16" viewBox="0 0 17 16"><circle cx="6" cy="6" r="5" fill="none" stroke={c.blue} strokeWidth="2" /><path d="M7 6h9v9H7z" fill="none" stroke={c.blue} strokeWidth="2" /><path d="M7 6h4v4l-4 1z" fill={c.blue} /></Svg>
          </IconButton>
          <IconButton $w={25} $h={22} aria-label="In and out">
            <Svg width="16" height="17" viewBox="0 0 16 17"><path d="M2 0h3l-1 3v4l1 1.500L4 10v4l1 3H2v-6L0 8.500 2 6zM14 0h-3l1 3v4l-1 1.500 1 1.500v4l-1 3h3v-6l2-2.500L14 6z" /><path d="M5 0h6v17H5z" opacity=".6" /></Svg>
          </IconButton>
          <Spacer />
          <SwitchButton>Toggle Switches / Modes</SwitchButton>
        </FooterTools>
        <Group $before={8}>
          <Svg width="15" height="7" viewBox="0 0 15 7"><path d="M0 7l4-4 1 1.500L9 0l6 7z" /></Svg>
          <ZoomSlider type="range" min="0" max="100" defaultValue="0" aria-label="Timeline zoom" />
          <Svg width="24" height="13" viewBox="0 0 24 13"><path d="M0 13L7 4l3 1-5 8zM7 13l8-13 9 13z" /></Svg>
        </Group>
      </TimelineFooter>
    </TimelinePanel>
  );
}

const menus = ["File", "Edit", "Composition", "Layer", "Effect", "Animation", "View", "Window", "Help"];

export default function App() {
  return (
    <>
      <Global />
      <Page>
        <TitleArea>
          <TitleRow>
            <AeBadge>Ae</AeBadge>
            <span>Adobe After Effects 2020 - Untitled Project.aep *</span>
            <WindowButtons>
              <WindowButton aria-label="Minimize"><Svg width="14" height="14" viewBox="0 0 14 14"><path d="M0 6.500h14" stroke="#222" /></Svg></WindowButton>
              <WindowButton aria-label="Restore"><Svg width="14" height="14" viewBox="0 0 14 14"><path d="M.5 3.500h10v10H.5zM3.500 3V.5h10v10H11" fill="none" stroke="#222" /></Svg></WindowButton>
              <WindowButton aria-label="Close"><Svg width="14" height="14" viewBox="0 0 14 14"><path d="M0 0l14 14M14 0L0 14" stroke="#222" strokeWidth="1.200" /></Svg></WindowButton>
            </WindowButtons>
          </TitleRow>
          <MenuBar>{menus.map((m) => <MenuItem key={m}>{m}</MenuItem>)}</MenuBar>
        </TitleArea>
        <ToolsBar />
        <Workspace>
          <ProjectPanel />
          <CompositionPanel />
          <EffectsPanel />
          <Column><AlignPanel /><CharacterPanel /></Column>
        </Workspace>
        <Timeline />
      </Page>
    </>
  );
}
